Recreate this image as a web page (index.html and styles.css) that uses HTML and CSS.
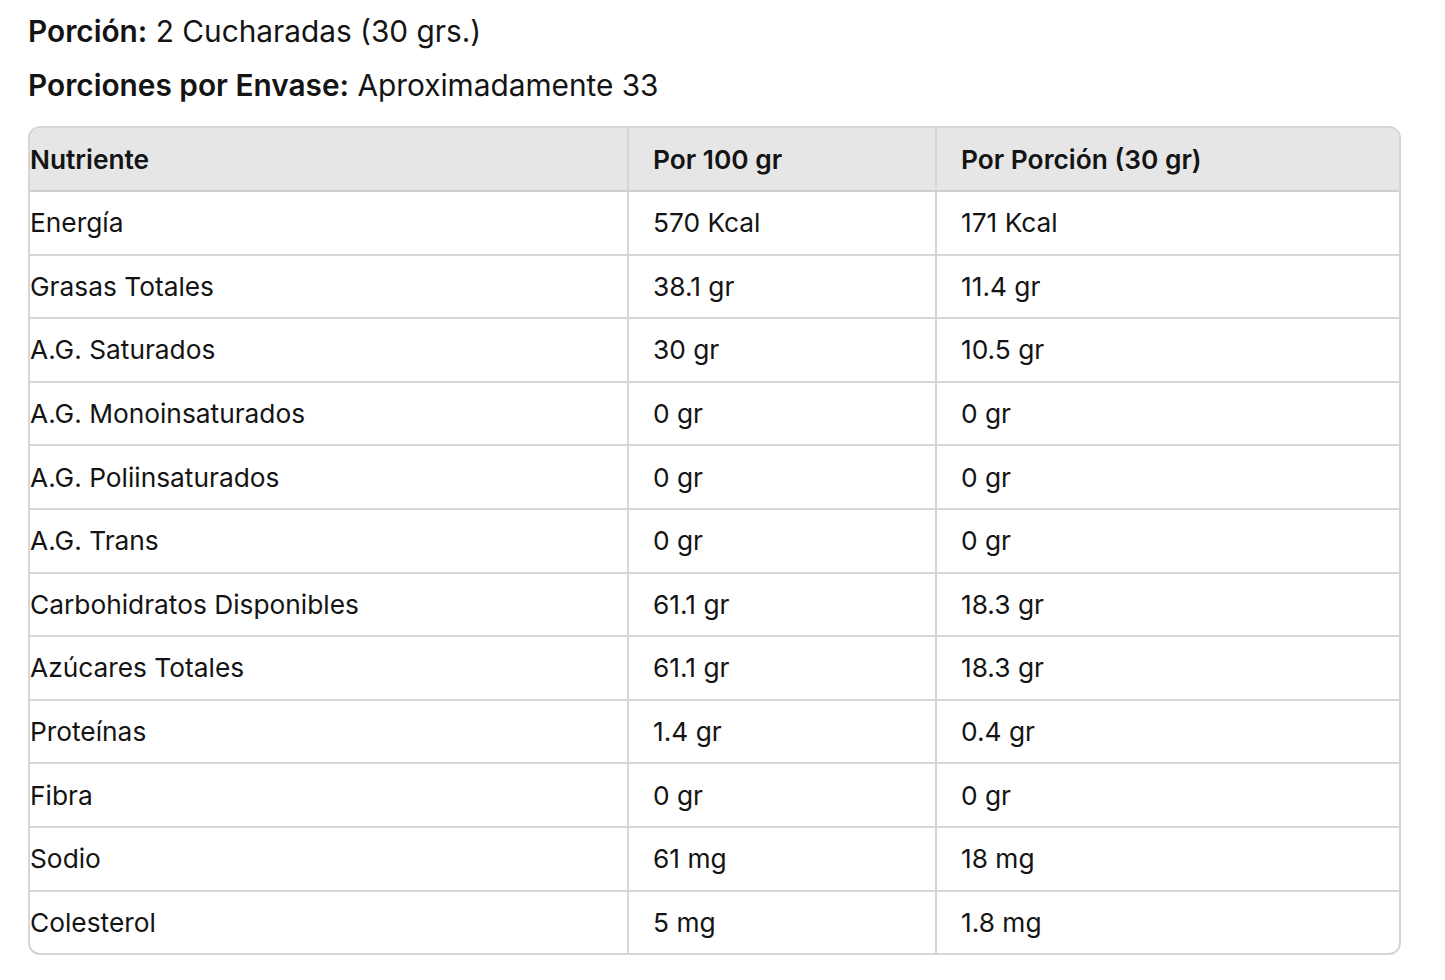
FILE: index.html
```html
<!DOCTYPE html>
<html lang="es">
<head>
<meta charset="utf-8">
<title>Información Nutricional</title>
<link rel="stylesheet" href="styles.css">
</head>
<body>
<div class="page">
  <p class="meta"><strong>Porción:</strong> 2 Cucharadas (30 grs.)</p>
  <p class="meta"><strong>Porciones por Envase:</strong> Aproximadamente 33</p>
  <div class="table-wrap">
    <table class="nutri">
      <colgroup><col class="c1"><col class="c2"><col class="c3"></colgroup>
      <thead>
        <tr><th>Nutriente</th><th>Por 100 gr</th><th>Por Porción (30 gr)</th></tr>
      </thead>
      <tbody>
        <tr><td>Energía</td><td>570 Kcal</td><td>171 Kcal</td></tr>
        <tr><td>Grasas Totales</td><td>38.1 gr</td><td>11.4 gr</td></tr>
        <tr><td>A.G. Saturados</td><td>30 gr</td><td>10.5 gr</td></tr>
        <tr><td>A.G. Monoinsaturados</td><td>0 gr</td><td>0 gr</td></tr>
        <tr><td>A.G. Poliinsaturados</td><td>0 gr</td><td>0 gr</td></tr>
        <tr><td>A.G. Trans</td><td>0 gr</td><td>0 gr</td></tr>
        <tr><td>Carbohidratos Disponibles</td><td>61.1 gr</td><td>18.3 gr</td></tr>
        <tr><td>Azúcares Totales</td><td>61.1 gr</td><td>18.3 gr</td></tr>
        <tr><td>Proteínas</td><td>1.4 gr</td><td>0.4 gr</td></tr>
        <tr><td>Fibra</td><td>0 gr</td><td>0 gr</td></tr>
        <tr><td>Sodio</td><td>61 mg</td><td>18 mg</td></tr>
        <tr><td>Colesterol</td><td>5 mg</td><td>1.8 mg</td></tr>
      </tbody>
    </table>
  </div>
</div>
</body>
</html>
```
FILE: styles.css
```css
html, body {
  margin: 0;
  padding: 0;
  background: #ffffff;
}
body {
  font-family: Inter, "Noto Sans", "Liberation Sans", sans-serif;
  color: #141414;
}
.page {
  padding: 13px 44px 0 28px;
}
.meta {
  margin: 0 0 18px 0;
  font-size: 29.8px;
  line-height: 36px;
}
.meta strong {
  font-weight: 600;
}
.table-wrap {
  margin-top: 23px;
  border: 2px solid #d6d6d6;
  border-radius: 12px;
  overflow: hidden;
  width: 1369px;
}
.nutri {
  width: 100%;
  table-layout: fixed;
  border-collapse: collapse;
  font-size: 26.3px;
}
.nutri .c1 { width: 598px; }
.nutri .c2 { width: 308px; }
.nutri th, .nutri td {
  text-align: left;
  padding: 0 24px;
  border-left: 2px solid #d6d6d6;
  border-top: 2px solid #d6d6d6;
  white-space: nowrap;
}
.nutri td {
  height: 61.6px;
}
.nutri th {
  height: 62px;
  background: #e6e6e6;
  font-weight: 600;
  border-top: none;
  border-bottom: 2px solid #cfcfcf;
}
.nutri th:first-child, .nutri td:first-child {
  border-left: none;
  padding-left: 0;
}
```
